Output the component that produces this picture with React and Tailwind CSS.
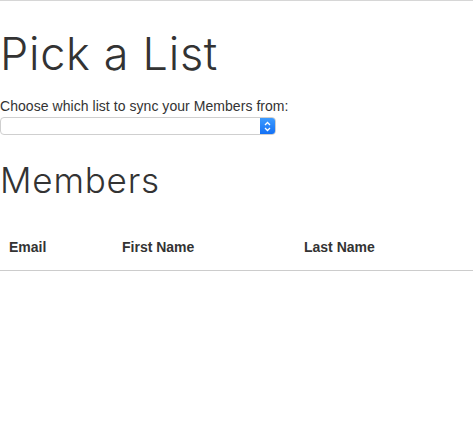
export default function App() {
  return (
    <div className="min-h-screen bg-white border-t border-[#d6d6d6] text-[#333] font-['Liberation_Sans',Arial,sans-serif]">
      <h1 className="mt-[25px] text-[45px] leading-[56px] font-light font-['Inter','Liberation_Sans',sans-serif] tracking-[0.7px]">
        Pick a List
      </h1>
      <p className="mt-[14px] text-[14px] leading-[20px] tracking-[0.05px]">
        Choose which list to sync your Members from:
      </p>
      <div className="mt-[1px] w-[276px] h-[18px] flex border border-[#cfcfcf] rounded-[4px] bg-white overflow-hidden">
        <div className="flex-1"></div>
        <div className="w-[15px] h-full bg-gradient-to-b from-[#3d9bff] to-[#1370f5] flex items-center justify-center">
          <svg width="7" height="11" viewBox="0 0 7 11" fill="none" stroke="white" strokeWidth="1.3">
            <path d="M1 4 L3.5 1.5 L6 4" />
            <path d="M1 7 L3.5 9.5 L6 7" />
          </svg>
        </div>
      </div>
      <h2 className="mt-[22px] text-[35px] leading-[46px] font-light font-['Inter','Liberation_Sans',sans-serif] tracking-[0.8px]">
        Members
      </h2>
      <div className="mt-[22px] grid grid-cols-[113px_182px_1fr] border-b border-[#cccccc] text-[14px] font-bold">
        <div className="px-[9px] py-[12px]">Email</div>
        <div className="px-[9px] py-[12px]">First Name</div>
        <div className="px-[9px] py-[12px]">Last Name</div>
      </div>
    </div>
  );
}
